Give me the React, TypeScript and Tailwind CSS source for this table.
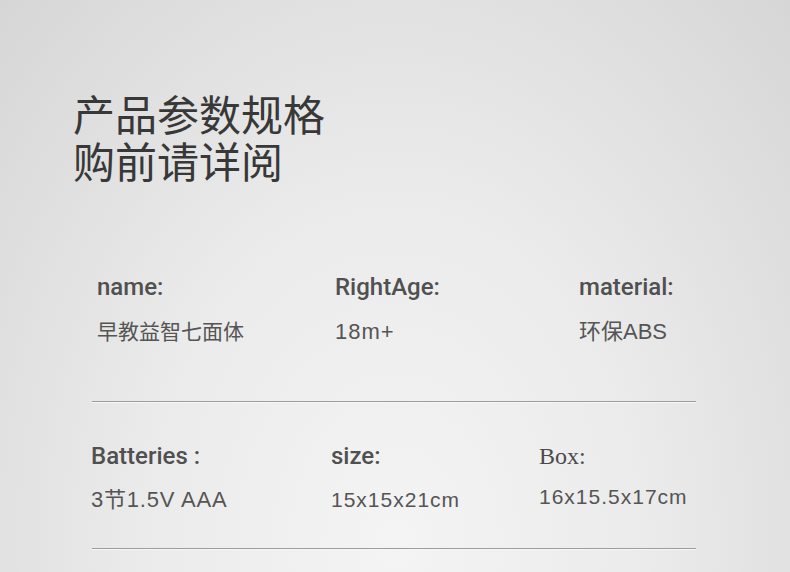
const titleFont = "font-['Noto_Sans_CJK_SC',sans-serif]";
const labelFont = "font-['Roboto','Noto_Sans_CJK_SC',sans-serif] font-medium text-[24px] leading-[28px] text-[#505050]";
const serifLabel = "font-['Liberation_Serif','Noto_Serif_CJK_SC',serif] text-[24px] leading-[28px] text-[#4a4a4a]";
const valueFont = "font-['Liberation_Sans','Noto_Sans_CJK_SC',sans-serif] text-[#555] whitespace-nowrap";

const Divider = ({ className }: { className: string }) => (
  <div className={`ml-[92px] w-[604px] h-px bg-[#9c9c9c] shadow-[0_1px_0_#f7f7f7] ${className}`} />
);

export default function App() {
  return (
    <div className="w-[790px] h-[572px] overflow-hidden bg-[radial-gradient(ellipse_at_50%_95%,#f4f4f4_0%,#ebebeb_45%,#d6d6d6_100%)]">
      <h1 className={`${titleFont} pt-[89px] pl-[73px] text-[42px] leading-[47px] font-normal text-[#383838]`}>
        <div>产品参数规格</div>
        <div>购前请详阅</div>
      </h1>

      <div className="flex pl-[97px] mt-[90px]">
        <div className="w-[238px]">
          <div className={labelFont}>name:</div>
          <div className={`${valueFont} mt-[18px] text-[21px] leading-[26px]`}>早教益智七面体</div>
        </div>
        <div className="w-[244px]">
          <div className={labelFont}>RightAge:</div>
          <div className={`${valueFont} mt-[18px] text-[22px] leading-[26px] tracking-[1px]`}>18m+</div>
        </div>
        <div className="w-[150px]">
          <div className={labelFont}>material:</div>
          <div className={`${valueFont} mt-[18px] text-[22px] leading-[26px]`}>环保ABS</div>
        </div>
      </div>

      <Divider className="mt-[56px]" />

      <div className="flex pl-[91px] mt-[40px]">
        <div className="w-[240px]">
          <div className={labelFont}>Batteries :</div>
          <div className={`${valueFont} mt-[17px] text-[22px] leading-[25px] tracking-[0.8px]`}>3节1.5V AAA</div>
        </div>
        <div className="w-[208px]">
          <div className={labelFont}>size:</div>
          <div className={`${valueFont} mt-[17px] text-[21px] leading-[25px] tracking-[1px]`}>15x15x21cm</div>
        </div>
        <div className="w-[200px]">
          <div className={serifLabel}>Box:</div>
          <div className={`${valueFont} mt-[14px] text-[21px] leading-[25px] tracking-[1px]`}>16x15.5x17cm</div>
        </div>
      </div>

      <Divider className="mt-[36px]" />
    </div>
  );
}
